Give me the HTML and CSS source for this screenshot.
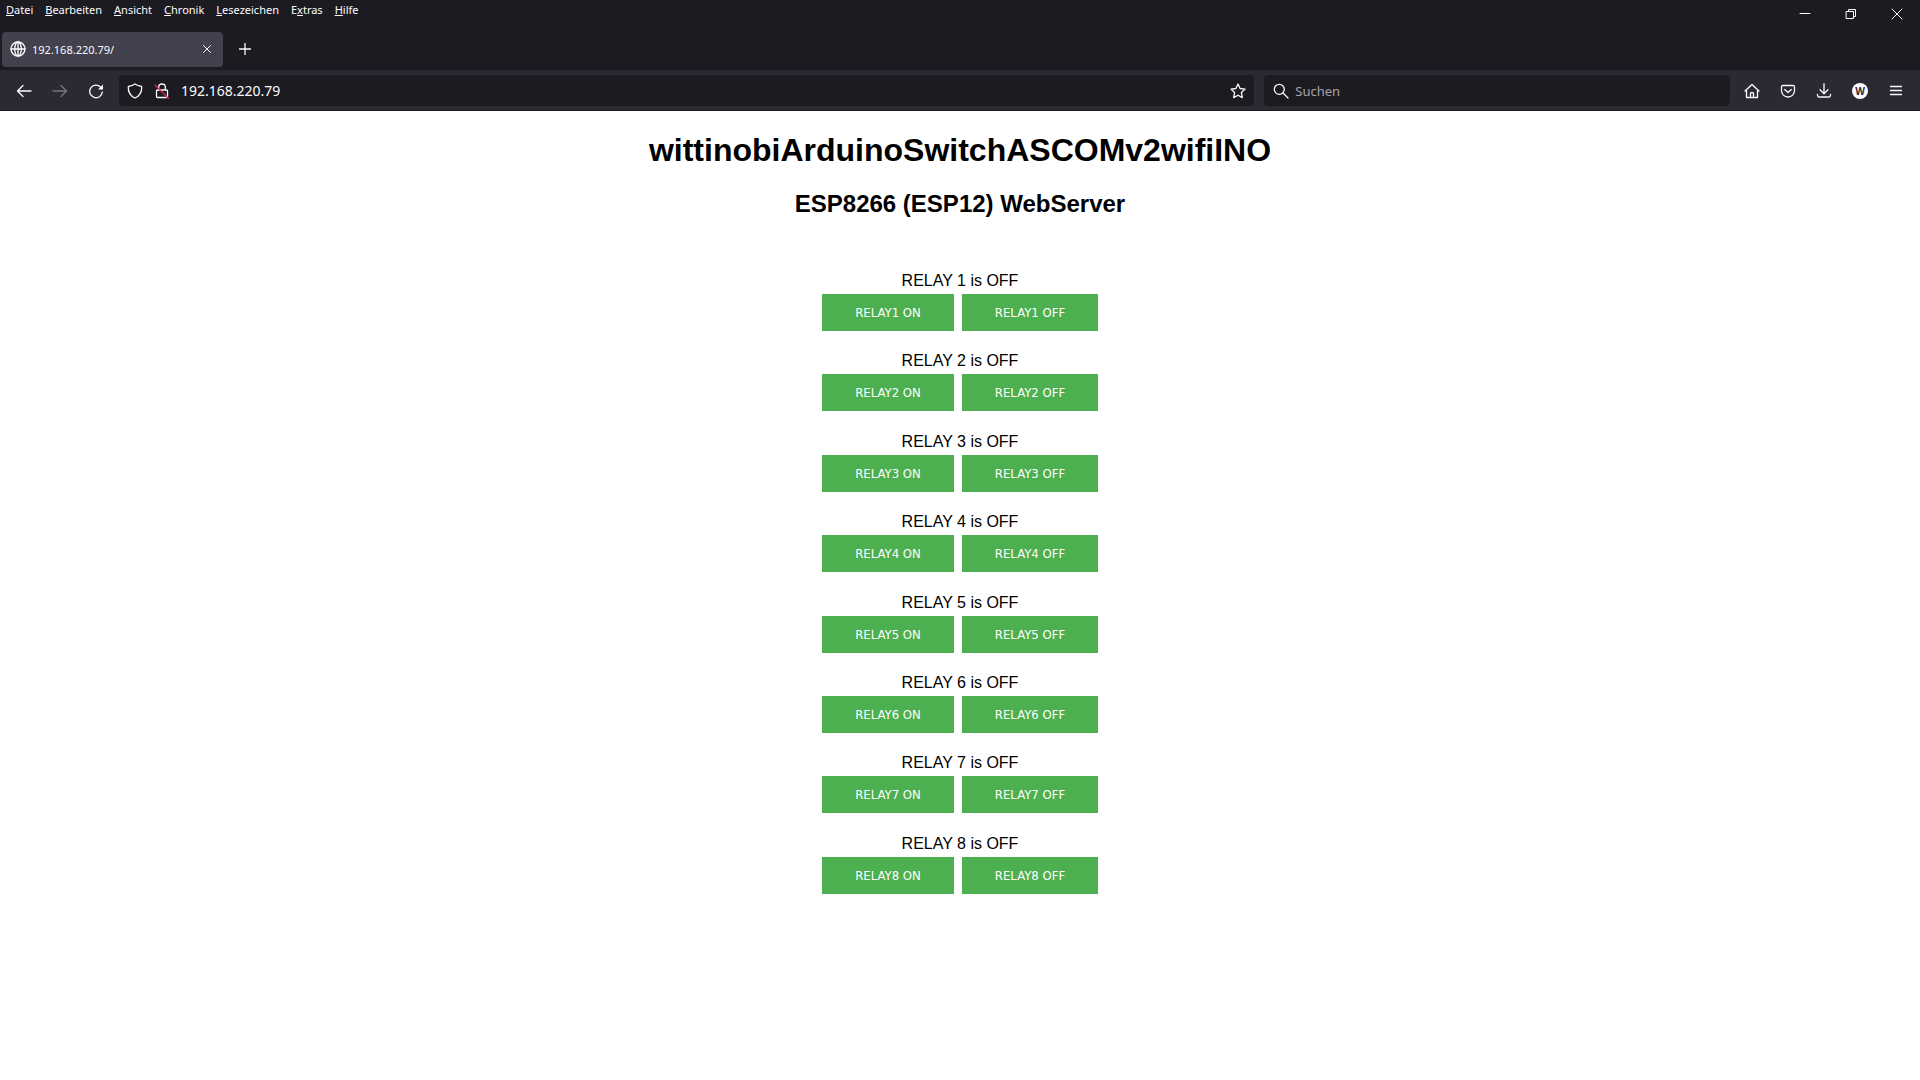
FILE: index.html
```html
<!DOCTYPE html>
<html lang="de">
<head>
<meta charset="utf-8">
<title>192.168.220.79/</title>
<link rel="stylesheet" href="styles.css">
</head>
<body>
<header class="browser">
  <div class="titlebar">
    <nav class="menu" aria-label="Menü">
      <button><u>D</u>atei</button>
      <button><u>B</u>earbeiten</button>
      <button><u>A</u>nsicht</button>
      <button><u>C</u>hronik</button>
      <button><u>L</u>esezeichen</button>
      <button>E<u>x</u>tras</button>
      <button><u>H</u>ilfe</button>
    </nav>
    <div class="window-controls">
      <button aria-label="Minimieren"><svg viewBox="0 0 16 16"><path d="M3 7.500h10"/></svg></button>
      <button aria-label="Verkleinern"><svg viewBox="0 0 16 16"><path d="M3.500 5.500h7v7h-7zM5.500 5V3.500h7v7H11"/></svg></button>
      <button aria-label="Schließen"><svg viewBox="0 0 16 16"><path d="M3 3l10 10M13 3L3 13"/></svg></button>
    </div>
  </div>
  <div class="tabs">
    <div class="tab">
      <svg viewBox="0 0 16 16"><circle cx="8" cy="8" r="7"/><ellipse cx="8" cy="8" rx="3.300" ry="7"/><path d="M1 8h14M8 1v14"/></svg>
      <span class="tab-title">192.168.220.79/</span>
      <button class="tab-close" aria-label="Tab schließen"><svg viewBox="0 0 16 16"><path d="M4.500 4.500l7 7M11.500 4.500l-7 7"/></svg></button>
    </div>
    <button class="new-tab" aria-label="Neuer Tab"><svg viewBox="0 0 16 16"><path d="M8 2.500v11M2.500 8h11"/></svg></button>
  </div>
  <div class="toolbar">
    <div class="tools history">
      <button aria-label="Zurück"><svg viewBox="0 0 16 16"><path d="M15 8H1.500M7 2.500L1.500 8 7 13.500"/></svg></button>
      <button aria-label="Vor" disabled><svg viewBox="0 0 16 16"><path d="M1 8h13.500M9 2.500L14.500 8 9 13.500"/></svg></button>
      <button aria-label="Neu laden"><svg viewBox="0 0 16 16"><path d="M12.500 4A6.300 6.300 0 1 0 14.300 9"/><path class="solid" d="M15 1.500v5h-5z"/></svg></button>
    </div>
    <div class="field address">
      <svg viewBox="0 0 16 16"><path d="M8 1C6 2.400 3.500 3.100 1.300 3.500 1 9 3.500 13 8 15c4.500-2 7-6 6.700-11.500C12.500 3.100 10 2.400 8 1z"/></svg>
      <svg class="lock" viewBox="0 0 16 16"><path d="M4.700 7V4a3.300 3 0 0 1 6.600 0V7M3.500 7h9q1 0 1 1v5.500q0 1-1 1h-9q-1 0-1-1V8q0-1 1-1z"/><path class="strike" d="M1 2l13.500 13.500"/></svg>
      <input type="text" aria-label="Adresse" value="192.168.220.79">
      <button aria-label="Lesezeichen setzen"><svg viewBox="0 0 16 16"><path d="M8 1l2.100 4.500 4.900.6-3.600 3.400.9 5.100L8 12.200l-4.300 2.400.9-5.100L1 6.100l4.900-.6z"/></svg></button>
    </div>
    <div class="field search">
      <svg viewBox="0 0 16 16"><circle cx="6.300" cy="6.300" r="5"/><path d="M10 10l5 5"/></svg>
      <input type="text" aria-label="Suchen" placeholder="Suchen">
    </div>
    <div class="tools actions">
      <button aria-label="Startseite"><svg viewBox="0 0 16 16"><path d="M1 8l7-6.500L15 8M2.500 7v7.500h11V7M6.500 14.500V10.500q0-1 1.500-1t1.500 1v4"/></svg></button>
      <button aria-label="Pocket"><svg viewBox="0 0 16 16"><path d="M3 2.500h10q1.500 0 1.500 1.500v3.500a6.500 6.500 0 0 1-13 0V4q0-1.500 1.500-1.500zM4.700 6.500L8 9.500l3.300-3"/></svg></button>
      <button aria-label="Downloads"><svg viewBox="0 0 16 16"><path d="M8 .7v10M4 6.700l4 4 4-4M1.500 11.500v1q0 1.500 1.500 1.500h10q1.500 0 1.500-1.500v-1"/></svg></button>
      <button class="account" aria-label="Konto">W</button>
      <button aria-label="Anwendungsmenü"><svg viewBox="0 0 16 16"><path d="M2.500 3.500h11M2.500 7.500h11M2.500 11.500h11"/></svg></button>
    </div>
  </div>
</header>
<main>
  <h1>wittinobiArduinoSwitchASCOMv2wifiINO</h1>
  <h2>ESP8266 (ESP12) WebServer</h2>
  <div class="relays">
    <section class="relay"><p>RELAY 1 is OFF</p><div class="pair"><button>RELAY1 ON</button><button>RELAY1 OFF</button></div></section>
    <section class="relay"><p>RELAY 2 is OFF</p><div class="pair"><button>RELAY2 ON</button><button>RELAY2 OFF</button></div></section>
    <section class="relay"><p>RELAY 3 is OFF</p><div class="pair"><button>RELAY3 ON</button><button>RELAY3 OFF</button></div></section>
    <section class="relay"><p>RELAY 4 is OFF</p><div class="pair"><button>RELAY4 ON</button><button>RELAY4 OFF</button></div></section>
    <section class="relay"><p>RELAY 5 is OFF</p><div class="pair"><button>RELAY5 ON</button><button>RELAY5 OFF</button></div></section>
    <section class="relay"><p>RELAY 6 is OFF</p><div class="pair"><button>RELAY6 ON</button><button>RELAY6 OFF</button></div></section>
    <section class="relay"><p>RELAY 7 is OFF</p><div class="pair"><button>RELAY7 ON</button><button>RELAY7 OFF</button></div></section>
    <section class="relay"><p>RELAY 8 is OFF</p><div class="pair"><button>RELAY8 ON</button><button>RELAY8 OFF</button></div></section>
  </div>
</main>
</body>
</html>
```
FILE: styles.css
```css
* { box-sizing: border-box; }
body { margin: 0; background: #fff; color: #000; font-family: "Liberation Sans", Arial, sans-serif; }
button, input { margin: 0; padding: 0; border: 0; background: none; color: inherit; font: inherit; }

/* Browser window */
.browser { background: #1c1b22; color: #fbfbfe; font-family: "Noto Sans", sans-serif; font-size: 11px; }
.browser svg { display: block; flex: none; width: 16px; height: 16px; fill: none; stroke: currentColor; stroke-width: 1.3; stroke-linejoin: round; stroke-linecap: round; }
.browser button { display: flex; align-items: center; justify-content: center; }

.titlebar { display: flex; justify-content: space-between; height: 28px; }
.menu { display: flex; gap: 12px; height: 18px; padding-left: 6px; }
.browser .menu button { display: block; }
.window-controls { display: flex; }
.window-controls button { width: 46px; height: 28px; }
.browser .window-controls svg { stroke-width: 1; }

.tabs { display: flex; align-items: center; height: 42px; padding: 0 2px; }
.tab { display: flex; align-items: center; gap: 6px; width: 221px; height: 35px; padding: 0 8px; border-radius: 4px; background: #42414d; }
.tab-title { flex: 1; }
.tab .tab-close svg { stroke-width: 1; }
.new-tab { width: 43px; height: 36px; }

.toolbar { display: flex; align-items: center; height: 41px; background: #2b2a33; border-top: 1px solid #25242c; border-bottom: 1px solid #1c1b22; }
.tools { display: flex; flex: none; }
.tools button { width: 36px; height: 32px; }
.history { padding: 0 5px 0 6px; }
.history button:disabled { color: #77767d; }
.actions { padding: 0 6px 0 4px; }
.solid { fill: currentColor; stroke: none; }
.field { display: flex; align-items: center; min-width: 0; height: 31px; border-radius: 4px; background: #1c1b22; font-size: 13px; }
.field input { flex: 1; min-width: 0; outline: 0; }
.address { flex: 5; gap: 11px; padding: 0 8px; margin-right: 10px; font-size: 14px; }
.search { flex: 2; gap: 6px; padding: 0 9px; }
.search input::placeholder { color: #a5a4aa; opacity: 1; }
.browser .strike { stroke: #e22850; }
.tools .account { width: 16px; height: 16px; margin: 8px 10px; border-radius: 50%; background: #fbfbfe; color: #2b2a33; font-size: 10px; font-weight: 700; }

/* Relay page */
main { display: flex; flex-direction: column; align-items: center; padding: 21px 8px; }
h1 { margin: 0 0 21px; font-size: 32px; line-height: 37px; }
h2 { margin: 0 0 53px; font-size: 24px; line-height: 28px; }
.relays { display: grid; min-height: 643px; }
.relay p { margin: 0 0 3px; font-size: 16px; line-height: 20px; text-align: center; }
.pair { display: grid; grid-template-columns: 132px 136px; gap: 8px; }
.pair button { height: 37px; background: #4caf50; color: #fff; font-family: "DejaVu Sans Condensed", "DejaVu Sans", sans-serif; font-size: 13px; }
```
